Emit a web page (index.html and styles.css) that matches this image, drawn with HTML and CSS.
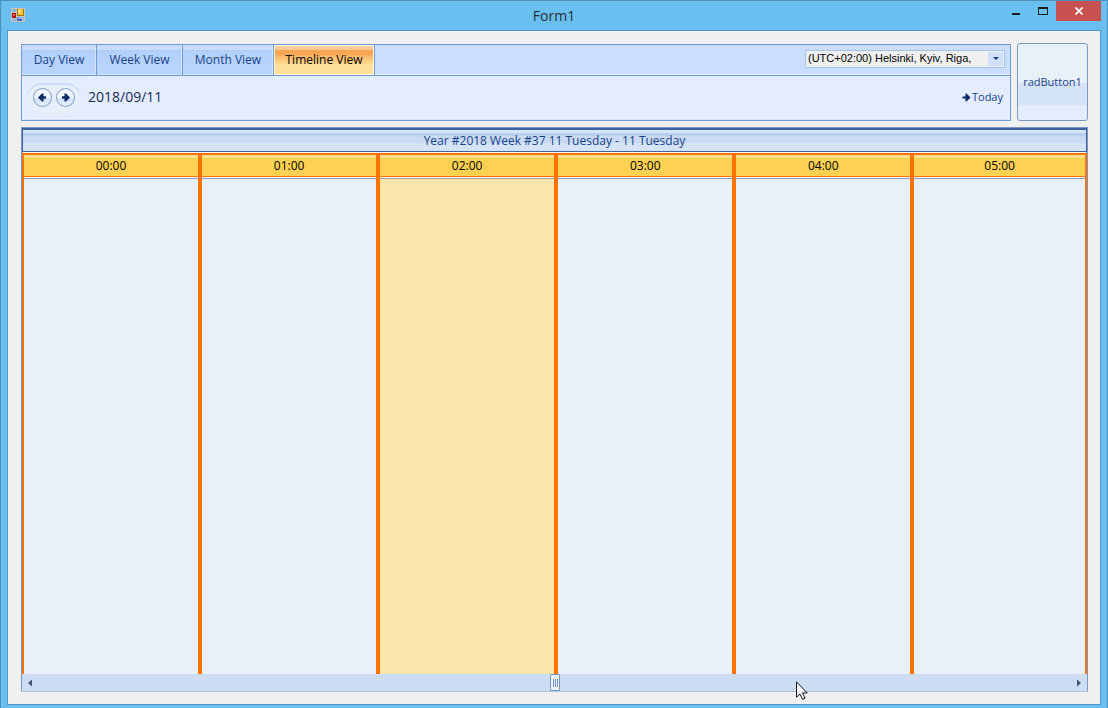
FILE: index.html
```html
<!DOCTYPE html>
<html lang="en">
<head>
    <meta charset="UTF-8">
    <meta name="viewport" content="width=device-width, initial-scale=1.0">
    <title>Form1</title>
    <link rel="stylesheet" href="styles.css">
</head>
<body>

<div class="window">
    <header class="title-bar">
        <svg class="app-icon" width="14" height="14" viewBox="0 0 14 14" shape-rendering="crispEdges">
            <rect width="14" height="14" fill="#c9c3bd"/>
            <path d="M1 1h4v3h-4zM1 11h4v2h-4zM12 9h1v4h-1z" fill="#8fb4d6"/>
            <rect x="6" y="1" width="7" height="7" fill="#a87408"/>
            <rect x="7" y="1" width="5" height="6" fill="#f8c62c"/>
            <rect x="7" y="2" width="3" height="3" fill="#ffe67c"/>
            <rect x="1" y="5" width="4" height="5" fill="#9c1414"/>
            <rect x="2" y="6" width="2" height="2" fill="#e65a4a"/>
            <rect x="6" y="9" width="5" height="4" fill="#3d6cc8"/>
            <rect x="7" y="9" width="4" height="2" fill="#86aef0"/>
        </svg>
        <h1 class="title">Form1</h1>
        <div class="window-buttons">
            <button class="window-button" aria-label="Minimize">
                <svg width="8" height="10" viewBox="0 0 8 10"><path d="M0 7h8v2h-8z" fill="#1e1e1e"/></svg>
            </button>
            <button class="window-button" aria-label="Maximize">
                <svg width="10" height="10" viewBox="0 0 10 10" shape-rendering="crispEdges"><path d="M0 1h10v8h-10zM1 3v5h8v-5z" fill="#1e1e1e" fill-rule="evenodd"/></svg>
            </button>
            <button class="window-button close" aria-label="Close">
                <svg width="8" height="8" viewBox="0 0 8 8"><path d="M0.5 0.5L7.5 7.5M7.5 0.5L0.5 7.5" stroke="#fff" stroke-width="1.7"/></svg>
            </button>
        </div>
    </header>

    <main class="client">
        <div class="top-row">
            <section class="navigator">
                <div class="tabs">
                    <button class="tab day">Day View</button>
                    <button class="tab week">Week View</button>
                    <button class="tab month">Month View</button>
                    <button class="tab timeline active">Timeline View</button>
                    <div class="zone">
                        <select class="zone-select" aria-label="Time zone">
                            <option>(UTC+02:00) Helsinki, Kyiv, Riga,</option>
                        </select>
                        <span class="zone-arrow"></span>
                    </div>
                </div>
                <div class="date-row">
                    <div class="arrows">
                        <button class="arrow" aria-label="Previous">
                            <svg width="9" height="9" viewBox="0 0 9 9"><path d="M0 4.5L4 0.5H5.5V3.3H8V5.7H5.5V8.5H4Z" fill="#0c2a66"/></svg>
                        </button>
                        <button class="arrow" aria-label="Next">
                            <svg width="9" height="9" viewBox="0 0 9 9"><path d="M9 4.5L5 0.5H3.5V3.3H1V5.7H3.5V8.5H5Z" fill="#0c2a66"/></svg>
                        </button>
                    </div>
                    <span class="date">2018/09/11</span>
                    <button class="today">
                        <svg width="9" height="9" viewBox="0 0 9 9"><path d="M8.5 4.5L4.5 0.5H3.5V3.5H0.5V5.5H3.5V8.5H4.5Z" fill="#0c2a66"/></svg>Today
                    </button>
                </div>
            </section>
            <button class="rad-button">radButton1</button>
        </div>

        <section class="scheduler">
            <table class="timeline-table">
                <colgroup>
                    <col class="hour-col"><col class="hour-col"><col class="hour-col"><col class="hour-col"><col class="hour-col"><col>
                </colgroup>
                <thead>
                    <tr>
                        <th class="range" colspan="6">Year #2018 Week #37 11 Tuesday - 11 Tuesday</th>
                    </tr>
                    <tr>
                        <th class="hour">00:00</th>
                        <th class="hour">01:00</th>
                        <th class="hour">02:00</th>
                        <th class="hour">03:00</th>
                        <th class="hour">04:00</th>
                        <th class="hour">05:00</th>
                    </tr>
                </thead>
                <tbody>
                    <tr>
                        <td class="slot"></td>
                        <td class="slot"></td>
                        <td class="slot selected"></td>
                        <td class="slot"></td>
                        <td class="slot"></td>
                        <td class="slot"></td>
                    </tr>
                </tbody>
            </table>
            <div class="scrollbar">
                <button class="scroll-button" aria-label="Scroll left">
                    <svg width="4" height="8" viewBox="0 0 4 8"><path d="M4 0.5V7.5L0 4Z" fill="#465272"/></svg>
                </button>
                <div class="thumb"></div>
                <button class="scroll-button" aria-label="Scroll right">
                    <svg width="4" height="8" viewBox="0 0 4 8"><path d="M0 0.5V7.5L4 4Z" fill="#465272"/></svg>
                </button>
            </div>
        </section>
    </main>

    <svg class="cursor" width="12" height="19" viewBox="0 0 12 19">
        <path d="M0.5 0.8V16.3L4 13L6.5 18.3L9 17.2L6.6 12H11.3Z" fill="#f4f4f4" stroke="#14142a"/>
    </svg>
</div>

</body>
</html>
```
FILE: styles.css
```css
* {
    box-sizing: border-box;
}

body {
    margin: 0;
    font-family: "Segoe UI", "Open Sans", "Noto Sans", sans-serif;
    font-size: 12px;
    line-height: 16px;
    color: #15428b;
}

button {
    margin: 0;
    padding: 0;
    border: none;
    background: none;
    color: inherit;
    font: inherit;
}

/* Window frame */
.window {
    position: relative;
    display: flex;
    flex-direction: column;
    height: 100vh;
    padding: 0 6px 3px;
    border: 1px solid #4a90ba;
    border-bottom: none;
    background: #69bff0;
}

.title-bar {
    display: grid;
    grid-template-columns: 1fr auto 1fr;
    height: 29px;
}

.app-icon {
    margin: 7px 0 0 4px;
}

.title {
    margin: 5px 0 0;
    font-size: 14px;
    line-height: 20px;
    font-weight: normal;
    color: #262c32;
}

.window-buttons {
    display: flex;
    justify-content: flex-end;
}

.window-button {
    display: flex;
    align-items: center;
    justify-content: center;
    width: 27px;
    height: 20px;
}

.window-button.close {
    width: 45px;
    background: #c75050;
}

.client {
    flex: 1;
    display: flex;
    flex-direction: column;
    gap: 6px;
    padding: 12px 12px 12px 13px;
    border: 1px solid #5298c4;
    background: #f0f0f0;
}

/* Navigator */
.top-row {
    display: flex;
    gap: 6px;
}

.navigator {
    flex: 1;
    margin-top: 1px;
    border: 1px solid #6e9bd2;
    background: #e3edff;
}

.tabs {
    display: flex;
    height: 31px;
    border-bottom: 1px solid #6e9bd2;
    background: #cadeff;
    box-shadow: inset 0 -1px #eaf2ff;
}

.tab {
    border-right: 1px solid #6e9bd2;
    background: linear-gradient(#c8dcfc 5px, #b0cdf8 5px, #b5d2fc 10px, #b9d5fe);
    box-shadow: inset -1px -1px #d5e5ff;
}

.tab.day {
    width: 75px;
}

.tab.week {
    width: 86px;
}

.tab.month {
    width: 91px;
}

.tab.timeline {
    width: 101px;
}

.tab.active {
    color: #000;
    background: linear-gradient(#fbd3a4 0, #f8c890 5px, #f7a650 5px, #f8a953 10px, #fbb96d 11px, #fdcb7c 16px, #ffe09a 20px, #ffe09c);
    box-shadow: inset 0 0 0 1px #fff5dc;
}

.zone {
    position: relative;
    width: 200px;
    height: 18px;
    margin: 5px 5px 0 auto;
}

.zone-select {
    appearance: none;
    width: 100%;
    height: 100%;
    padding: 0 18px 2px 2px;
    border: 1px solid #a3c2ea;
    border-radius: 0;
    background: #f0f0f0;
    color: #000;
    font: 11px/14px "Microsoft Sans Serif", "Liberation Sans", sans-serif;
}

.zone-arrow {
    position: absolute;
    top: 2px;
    right: 2px;
    width: 15px;
    height: 14px;
    background: #cfe0f8;
    pointer-events: none;
}

.zone-arrow::after {
    content: "";
    position: absolute;
    top: 5px;
    left: 5px;
    border: 3px solid transparent;
    border-top-color: #15428b;
    border-bottom: none;
}

.date-row {
    display: flex;
    align-items: center;
    height: 44px;
    padding: 0 7px 0 5px;
    border-bottom: 1px solid #d3e2f8;
    box-shadow: inset 0 -1px #e9f1fb;
}

.arrows {
    display: flex;
    gap: 4px;
    padding: 5px 6px;
    border-radius: 15px;
    background: #e6effa;
    box-shadow: inset 0 2px 1px #c8dbf5, 0 1px #eef2f6;
}

.arrow {
    display: flex;
    align-items: center;
    justify-content: center;
    width: 19px;
    height: 19px;
    border: 1px solid #7f9dc4;
    border-radius: 50%;
    background: linear-gradient(#f0f6fd 50%, #cfe2f7 50%, #e4effc);
}

.date {
    margin-left: 7px;
    padding-bottom: 2px;
    font-size: 14px;
    line-height: 20px;
    color: #1a2a52;
}

.today {
    display: flex;
    align-items: center;
    gap: 1px;
    margin-left: auto;
    padding-bottom: 1px;
    font-size: 11px;
}

.rad-button {
    width: 71px;
    height: 78px;
    border: 1px solid #7b98c2;
    border-radius: 3px;
    background: linear-gradient(#e8f0fa 39px, #d4e3f8 39px, #d4e3f8 61px, #e3edff 61px);
    font-size: 11px;
}

/* Scheduler */
.scheduler {
    flex: 1;
    display: flex;
    flex-direction: column;
    border: 1px solid #7b98c2;
    border-bottom-color: #b0c6e4;
}

.timeline-table {
    flex: 1;
    width: 100%;
    table-layout: fixed;
    border-collapse: separate;
    border-spacing: 0;
}

.hour-col {
    width: 16.72%;
}

.timeline-table th,
.timeline-table td {
    padding: 0;
    font-weight: normal;
}

.range {
    height: 25px;
    border: 1px solid #3e62a0;
    border-top-width: 2px;
    border-bottom-color: #f4f8fe;
    background: linear-gradient(#d7e5fa 3px, #b9d0ee 3px, #b9d0ee 6px, #c9daf2 6px, #c9daf2 13px, #d4e3f8 13px);
    box-shadow: inset 0 -1px #3e62a0;
}

/* yellow header with an orange line and a pale gap under it */
.hour {
    height: 25px;
    border: 2px solid #ff7300;
    border-bottom: none;
    background: linear-gradient(#ffdc8e 3px, #fed152 3px, #fed152 21px, #ff7300 21px, #ff7300 22px, #f4f6fc 22px);
    color: #000;
}

.timeline-table .hour {
    padding-bottom: 2px;
}

.slot {
    border: 2px solid #ff7300;
    border-top: none;
    border-bottom: none;
    background: linear-gradient(#8d9cc4 1px, #e8f0fa 1px);
}

.slot.selected {
    background: linear-gradient(#a89c9c 1px, #fde6ab 1px);
}

.scrollbar {
    display: flex;
    justify-content: space-between;
    height: 17px;
    background: #cbdcf3;
}

.scroll-button {
    display: flex;
    align-items: center;
    justify-content: center;
    width: 16px;
}

.thumb {
    width: 10px;
    padding: 0 1px;
    border: 1px solid #7594c0;
    border-radius: 1px;
    background: linear-gradient(90deg, #6f8fbd 1px, transparent 1px) 1px 4px / 2px 8px repeat-x content-box, #edf4fd;
}

.cursor {
    position: absolute;
    left: 795px;
    top: 680px;
    pointer-events: none;
}
```
